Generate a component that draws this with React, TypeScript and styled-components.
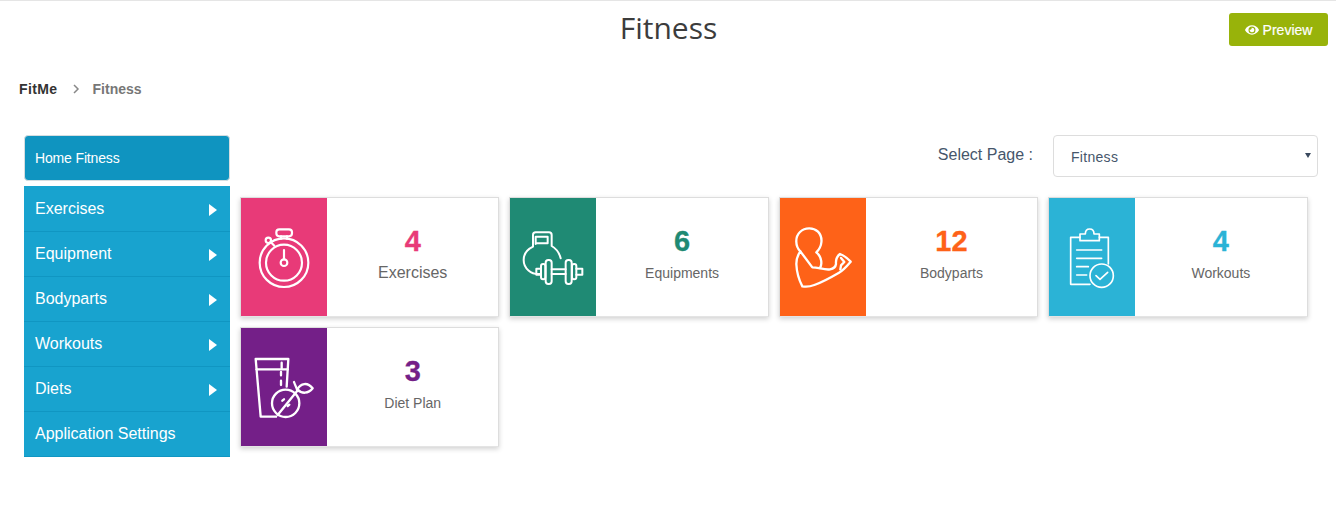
import React from 'react';
import styled, { createGlobalStyle } from 'styled-components';
import { FaEye } from 'react-icons/fa';

const GlobalStyle = createGlobalStyle`
	html, body {
		margin: 0;
		padding: 0;
		background: #fff;
		font-family: "Liberation Sans", Arial, sans-serif;
	}
	* {
		box-sizing: border-box;
	}
`;

const Page = styled.div`
	width: 1336px;
	height: 508px;
	border-top: 1px solid #e5e5e5;
	overflow: hidden;
`;

const Header = styled.header`
	display: grid;
	grid-template-columns: 1fr auto 1fr;
	height: 50px;
	padding-top: 12px;
`;

const Title = styled.h1`
	grid-column: 2;
	margin: -1px 0 0 1px;
	font-family: "Open Sans", sans-serif;
	font-size: 30px;
	font-weight: 400;
	line-height: 32px;
	color: #3c3c3c;
`;

const PreviewButton = styled.button`
	grid-column: 3;
	justify-self: end;
	display: flex;
	align-items: center;
	justify-content: center;
	gap: 4px;
	width: 99px;
	height: 33px;
	margin-right: 8px;
	padding: 0;
	border: none;
	border-radius: 3px;
	background: #98b30a;
	color: #fff;
	font-family: inherit;
	font-size: 14px;
	font-weight: 400;
	-webkit-text-stroke: 0.2px #fff;
`;

const Breadcrumb = styled.nav`
	display: flex;
	align-items: center;
	height: 16px;
	margin: 30px 0 0 19px;
	font-size: 14px;
	font-weight: 700;
`;

const Crumb = styled.span<{ $muted?: boolean }>`
	color: ${props => props.$muted ? '#777' : '#333'};
	letter-spacing: ${props => props.$muted ? 0 : .4}px;
`;

const CrumbArrow = styled.svg`
	width: 8px;
	height: 10px;
	margin: 0 13px 0 14px;
`;

const Main = styled.main`
	display: flex;
	align-items: flex-start;
	gap: 10px;
	margin-top: 38px;
	padding-left: 24px;
`;

const Sidebar = styled.aside`
	display: flex;
	flex-direction: column;
	width: 206px;
`;

const HomeLink = styled.div`
	display: flex;
	align-items: center;
	height: 46px;
	margin-bottom: 5px;
	padding-left: 10px;
	border: 1px solid #d5dde0;
	border-radius: 4px;
	background: #0f94c0;
	color: #fff;
	font-size: 14px;
	letter-spacing: -.15px;
`;

const Menu = styled.ul`
	margin: 0;
	padding: 1px 0 0;
	list-style: none;
	background: #18a3cf;
`;

const MenuItem = styled.li`
	display: flex;
	align-items: center;
	justify-content: space-between;
	height: 45px;
	padding: 0 13px 0 11px;
	border-bottom: 1px solid #1096c2;
	color: #fff;
	font-size: 16px;
`;

const MenuArrow = styled.span`
	width: 0;
	height: 0;
	margin-top: 1px;
	border-left: 8px solid #fff;
	border-top: 6px solid transparent;
	border-bottom: 6px solid transparent;
`;

const Content = styled.section`
	display: flex;
	flex-direction: column;
`;

const SelectRow = styled.div`
	display: flex;
	align-items: center;
	justify-content: flex-end;
	gap: 20px;
	width: 1078px;
	height: 42px;
	margin-bottom: 20px;
`;

const SelectLabel = styled.label`
	margin-top: -3px;
	color: #46566b;
	font-size: 16px;
`;

const SelectBox = styled.div`
	position: relative;
	width: 265px;
	height: 42px;
`;

const PageSelect = styled.select`
	width: 100%;
	height: 100%;
	padding: 2px 0 0 17px;
	border: 1px solid #ddd;
	border-radius: 4px;
	background: #fff;
	color: #46566b;
	font-family: inherit;
	font-size: 14px;
	letter-spacing: .3px;
	appearance: none;
`;

const SelectCaret = styled.span`
	position: absolute;
	top: 18px;
	right: 7px;
	width: 0;
	height: 0;
	border-top: 5px solid #3b4a5e;
	border-left: 3px solid transparent;
	border-right: 3px solid transparent;
	pointer-events: none;
`;

const CardGrid = styled.div`
	display: grid;
	grid-template-columns: repeat(4, 259.4px);
	grid-auto-rows: 120px;
	gap: 10px;
`;

const Card = styled.article`
	display: flex;
	border: 1px solid #ddd;
	border-bottom-color: #e4e4e4;
	background: #fff;
	box-shadow: 0 2px 5px rgba(0, 0, 0, .18);
`;

const IconPanel = styled.div<{ $color: string }>`
	flex: none;
	width: 86px;
	background: ${props => props.$color};
`;

const IconArt = styled.svg<{ $weight: number }>`
	display: block;
	width: 86px;
	height: 118px;
	fill: none;
	stroke: #fff;
	stroke-width: ${props => props.$weight};
	stroke-linecap: round;
	stroke-linejoin: round;
`;

const CardBody = styled.div`
	flex: 1;
	display: flex;
	flex-direction: column;
	align-items: center;
	padding-top: 26px;
	color: #666;
`;

const Count = styled.div<{ $color: string }>`
	color: ${props => props.$color};
	font-size: 29px;
	font-weight: 700;
	line-height: 34px;
	-webkit-text-stroke: 0.3px ${props => props.$color};
`;

const CardLabel = styled.div<{ $large?: boolean }>`
	margin-top: 6px;
	font-size: ${props => props.$large ? 16 : 14}px;
	line-height: 18px;
`;

// Icons are traced from the picture at 3x, hence the large viewBoxes
const StopwatchIcon = () => (
	<IconArt viewBox="3 24 258 354" $weight={6.5}>
		<circle cx="132" cy="218" r="73" />
		<circle cx="132" cy="218" r="54" />
		<circle cx="132" cy="218" r="10" />
		<path d="M132 180V208" />
		<rect x="109" y="118" width="47" height="21" rx="9" />
		<path d="M123 139V146M141 139V146" />
		<path d="M103 167L92 156" />
		<circle cx="85" cy="151" r="8" />
	</IconArt>
);

const KettlebellIcon = () => (
	<IconArt viewBox="15 24 258 354" $weight={6}>
		<path d="M106 252C78 255 56 235 56 210C56 192 67 178 84 170V135Q84 127 92 127H132Q140 127 140 135V168C152 175 163 188 167 205" />
		<path d="M92 162V140H128V160H92" />
		<rect x="108" y="222" width="13" height="46" rx="6" />
		<rect x="122" y="210" width="18" height="72" rx="8" />
		<rect x="182" y="210" width="18" height="72" rx="8" />
		<rect x="201" y="222" width="13" height="46" rx="6" />
		<path d="M108 236H94V254H108" />
		<path d="M214 236H232V254H214" />
		<path d="M140 238H182M140 252H182" />
	</IconArt>
);

const ArmIcon = () => (
	<IconArt viewBox="15 24 258 354" $weight={7}>
		<path d="M76 184C60 168 60 140 75 126C90 112 115 112 129 125C145 142 142 170 124 187C134 195 139 207 139 220C139 226 137 230 135 234" />
		<path d="M112 232C130 232 150 241 165 238C176 236 182 230 183 222C182 210 184 200 195 192C207 196 218 206 227 215C216 228 206 240 192 248C168 262 142 276 118 285C105 290 92 291 82 289C72 270 65 245 64 222C64 205 68 195 76 184Z" />
		<path d="M198 204L208 216L198 226L196 238" />
	</IconArt>
);

const ClipboardIcon = () => (
	<IconArt viewBox="27 24 258 354" $weight={5}>
		<path d="M120 142H92V283H150M178 142H205V222" />
		<path d="M120 152V132H136C136 122 142 117 149 117C156 117 162 122 162 132H178V152Z" />
		<path d="M110 180H185M110 205H185M110 230H145M110 255H140" />
		<circle cx="185" cy="257" r="35" />
		<path d="M168 257L180 268L203 247" />
	</IconArt>
);

const GlassIcon = () => (
	<IconArt viewBox="3 24 258 354" $weight={7}>
		<path d="M108 290H62L47 117H145L140 200" />
		<path d="M50 148H143" />
		<path d="M125 128V145M123 156V166M123 182V195" />
		<circle cx="137" cy="250" r="41" />
		<path d="M113 285L172 212" />
		<path d="M127 242L132 238M143 258L148 254" />
		<path d="M162 186C165 195 170 203 172 212" />
		<path d="M172 208C182 190 202 185 218 205C205 222 185 222 172 208Z" />
	</IconArt>
);

const Cards = [
	{ color: '#e83a78', count: 4, label: 'Exercises', large: true, Icon: StopwatchIcon },
	{ color: '#1f8a74', count: 6, label: 'Equipments', Icon: KettlebellIcon },
	{ color: '#fe6218', count: 12, label: 'Bodyparts', Icon: ArmIcon },
	{ color: '#2bb3d6', count: 4, label: 'Workouts', Icon: ClipboardIcon },
	{ color: '#741f88', count: 3, label: 'Diet Plan', Icon: GlassIcon },
];

const MenuItems = ['Exercises', 'Equipment', 'Bodyparts', 'Workouts', 'Diets'];

const App = () => (
	<Page>
		<GlobalStyle />
		<Header>
			<Title>Fitness</Title>
			<PreviewButton><FaEye size={14} /> Preview</PreviewButton>
		</Header>
		<Breadcrumb>
			<Crumb>FitMe</Crumb>
			<CrumbArrow viewBox="0 0 8 10">
				<path d="M2 1L6 5L2 9" fill="none" stroke="#888" strokeWidth="1.5" />
			</CrumbArrow>
			<Crumb $muted>Fitness</Crumb>
		</Breadcrumb>
		<Main>
			<Sidebar>
				<HomeLink>Home Fitness</HomeLink>
				<Menu>
					{MenuItems.map(item => (
						<MenuItem key={item}>{item}<MenuArrow /></MenuItem>
					))}
					<MenuItem>Application Settings</MenuItem>
				</Menu>
			</Sidebar>
			<Content>
				<SelectRow>
					<SelectLabel>Select Page :</SelectLabel>
					<SelectBox>
						<PageSelect defaultValue="Fitness">
							<option>Fitness</option>
						</PageSelect>
						<SelectCaret />
					</SelectBox>
				</SelectRow>
				<CardGrid>
					{Cards.map(c => (
						<Card key={c.label}>
							<IconPanel $color={c.color}><c.Icon /></IconPanel>
							<CardBody>
								<Count $color={c.color}>{c.count}</Count>
								<CardLabel $large={c.large}>{c.label}</CardLabel>
							</CardBody>
						</Card>
					))}
				</CardGrid>
			</Content>
		</Main>
	</Page>
);

export default App;
